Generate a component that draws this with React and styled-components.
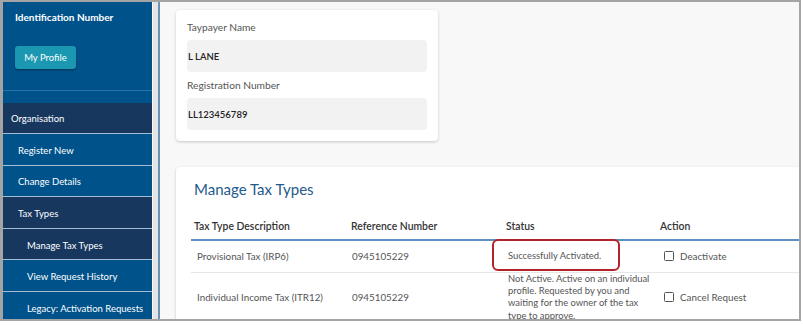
import React from 'react';
import styled, { createGlobalStyle } from 'styled-components';

const GlobalStyle = createGlobalStyle`
  html, body {
    margin: 0;
    padding: 0;
    background: #fff;
  }
  body {
    font-family: Lato, "Open Sans", sans-serif;
  }
`;

const Frame = styled.div`
  width: 801px;
  height: 321px;
  box-sizing: border-box;
  border: 2px solid #a4a4a4;
  border-left-width: 3px;
  display: flex;
  overflow: hidden;
  background: #f8f8f8;
`;

const Sidebar = styled.nav`
  width: 149px;
  flex-shrink: 0;
  background: #00528a;
  display: flex;
  flex-direction: column;
  overflow: hidden;
`;

const ProfileBlock = styled.div`
  height: 89px;
  flex-shrink: 0;
  box-sizing: border-box;
  padding: 8px 12px 0;
  border-bottom: 1px solid #2d72a5;
  margin-bottom: 11.5px;
`;

const SideTitle = styled.div`
  color: #fff;
  font-weight: 700;
  font-size: 10px;
  line-height: 14px;
`;

const ProfileButton = styled.button`
  margin-top: 22px;
  width: 61px;
  height: 23px;
  padding: 0;
  border: none;
  border-radius: 3px;
  background: #1b97b1;
  box-shadow: 0 1px 2px rgba(0, 0, 0, 0.4);
  color: #fff;
  font-family: Lato, sans-serif;
  font-size: 9.5px;
  cursor: pointer;
`;

const NavItem = styled.div`
  height: 31.6px;
  flex-shrink: 0;
  box-sizing: border-box;
  display: flex;
  align-items: center;
  padding-top: 2px;
  padding-left: ${(p) => [8, 15, 24][p.$level]}px;
  border-bottom: 1px solid #a3bdd4;
  background: ${(p) => (p.$dark ? '#17375f' : '#00528a')};
  color: #fff;
  font-size: 9.5px;
  white-space: nowrap;
`;

const ScrollTrack = styled.div`
  width: 5px;
  flex-shrink: 0;
  background: #e4e4e4;
  border-left: 1px solid #f6f6f6;
`;

const Main = styled.main`
  flex: 1;
  min-width: 0;
  border-left: 2px solid #6a92b7;
  padding: 8px 0 0 16px;
  display: flex;
  flex-direction: column;
  gap: 26px;
  overflow: hidden;
`;

const InfoCard = styled.section`
  width: 262px;
  flex-shrink: 0;
  box-sizing: border-box;
  padding: 10px 11px 11px;
  background: #fff;
  border-radius: 4px;
  box-shadow: 0 1px 3px rgba(0, 0, 0, 0.2);
`;

const FieldLabel = styled.div`
  font-size: 10.2px;
  line-height: 14px;
  color: #555;
  margin-top: ${(p) => (p.$first ? 0 : 6)}px;
`;

const ValueBox = styled.div`
  height: 32px;
  margin-top: 6px;
  padding-left: 1px;
  display: flex;
  align-items: center;
  background: #f2f2f2;
  border-radius: 4px;
  font-size: 9.5px;
  font-weight: 600;
  color: #222;
`;

const TaxCard = styled.section`
  flex: 1;
  margin-right: -60px;
  padding: 12px 0 0 15px;
  background: #fff;
  border-radius: 4px;
  box-shadow: 0 1px 3px rgba(0, 0, 0, 0.2);
`;

const Heading = styled.h2`
  margin: 0;
  padding-left: 3px;
  font-size: 15px;
  line-height: 20px;
  font-weight: 400;
  color: #1f5a8c;
`;

const Table = styled.table`
  margin-top: 13px;
  width: 666px;
  border-collapse: collapse;
  table-layout: fixed;
`;

const HeadCell = styled.th`
  padding: 7px 3px 6px;
  line-height: 14px;
  text-align: left;
  font-size: 10.4px;
  font-weight: 600;
  color: #333;
  border-bottom: 2px solid #5d91c2;
`;

const Row = styled.tr`
  border-bottom: 1px solid #e6e6e6;
`;

const Cell = styled.td`
  position: relative;
  height: 31px;
  padding: 0 0 0 ${(p) => p.$pad ?? 5}px;
  font-size: ${(p) => p.$size ?? 9.4}px;
  line-height: 12.2px;
  color: #555;
  vertical-align: middle;
`;

const Highlight = styled.span`
  position: absolute;
  left: -11px;
  top: -2px;
  width: 128px;
  height: 32px;
  box-sizing: border-box;
  border: 2px solid #b3242a;
  border-radius: 6px;
  pointer-events: none;
`;

const CheckLabel = styled.label`
  display: inline-flex;
  align-items: center;
  gap: 6px;
  cursor: pointer;
`;

const CheckBox = styled.span`
  width: 10px;
  height: 10px;
  box-sizing: border-box;
  border: 1.3px solid #555;
  border-radius: 1.5px;
  background: #fff;
`;

const navItems = [
  { label: 'Organisation', level: 0, dark: true },
  { label: 'Register New', level: 1 },
  { label: 'Change Details', level: 1 },
  { label: 'Tax Types', level: 1, dark: true },
  { label: 'Manage Tax Types', level: 2, dark: true },
  { label: 'View Request History', level: 2 },
  { label: 'Legacy: Activation Requests', level: 2 },
];

const taxTypes = [
  {
    name: 'Provisional Tax (IRP6)',
    ref: '0945105229',
    status: 'Successfully Activated.',
    action: 'Deactivate',
    flagged: true,
  },
  {
    name: 'Individual Income Tax (ITR12)',
    ref: '0945105229',
    status:
      'Not Active. Active on an individual profile. Requested by you and waiting for the owner of the tax type to approve.',
    action: 'Cancel Request',
  },
];

const App = () => {
  return (
    <>
      <GlobalStyle />
      <Frame>
        <Sidebar>
          <ProfileBlock>
            <SideTitle>Identification Number</SideTitle>
            <ProfileButton>My Profile</ProfileButton>
          </ProfileBlock>
          {navItems.map((item) => (
            <NavItem key={item.label} $level={item.level} $dark={item.dark}>
              {item.label}
            </NavItem>
          ))}
        </Sidebar>
        <ScrollTrack />
        <Main>
          <InfoCard>
            <FieldLabel $first>Taypayer Name</FieldLabel>
            <ValueBox>L LANE</ValueBox>
            <FieldLabel>Registration Number</FieldLabel>
            <ValueBox>LL123456789</ValueBox>
          </InfoCard>
          <TaxCard>
            <Heading>Manage Tax Types</Heading>
            <Table>
              <colgroup>
                <col style={{ width: 157 }} />
                <col style={{ width: 155 }} />
                <col style={{ width: 154 }} />
                <col />
              </colgroup>
              <thead>
                <tr>
                  <HeadCell>Tax Type Description</HeadCell>
                  <HeadCell>Reference Number</HeadCell>
                  <HeadCell>Status</HeadCell>
                  <HeadCell>Action</HeadCell>
                </tr>
              </thead>
              <tbody>
                {taxTypes.map((t) => (
                  <Row key={t.name}>
                    <Cell $pad={6} $size={9.8}>{t.name}</Cell>
                    <Cell $pad={4} $size={9.8}>{t.ref}</Cell>
                    <Cell>
                      {t.status}
                      {t.flagged && <Highlight />}
                    </Cell>
                    <Cell $pad={7} $size={9.8}>
                      <CheckLabel>
                        <CheckBox />
                        {t.action}
                      </CheckLabel>
                    </Cell>
                  </Row>
                ))}
              </tbody>
            </Table>
          </TaxCard>
        </Main>
      </Frame>
    </>
  );
};

export default App;
